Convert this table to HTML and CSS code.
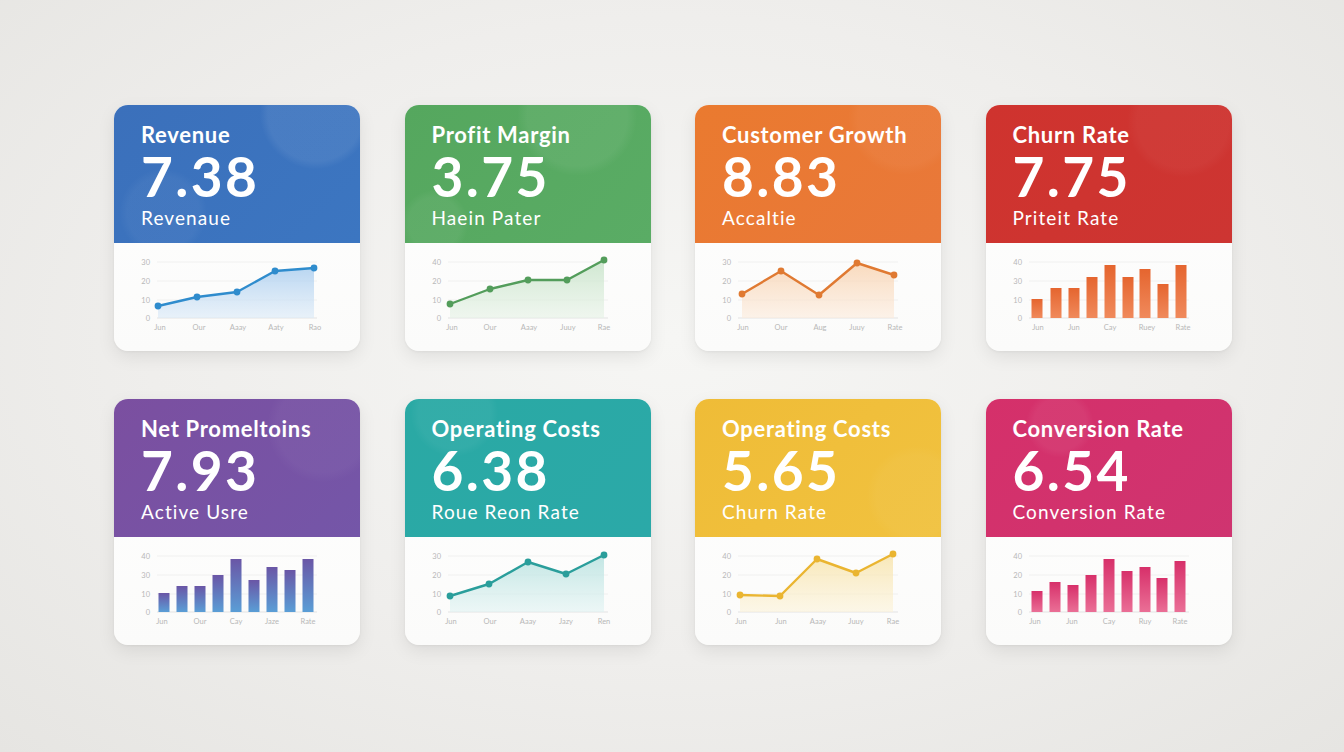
FILE: index.html
```html
<!DOCTYPE html>
<html>
<head>
<meta charset="utf-8">
<link rel="stylesheet" href="styles.css">
</head>
<body>
<main class="board">
  <section class="card">
    <div class="head blue">
      <div class="title">Revenue</div>
      <div class="value">7.38</div>
      <div class="sub">Revenaue</div>
    </div>
    <div class="body">
      <svg class="chart" viewBox="0 0 246 108" width="246" height="108">
        <defs><linearGradient id="g1" x1="0" y1="0" x2="0" y2="1"><stop offset="0" stop-color="#a9cdef" stop-opacity="0.8"/><stop offset="1" stop-color="#dbeaf8" stop-opacity="0.6"/></linearGradient></defs>
        <g class="grid"><line x1="43" y1="19" x2="203" y2="19"/><line x1="43" y1="38" x2="203" y2="38"/><line x1="43" y1="57" x2="203" y2="57"/><line class="axis" x1="43" y1="75" x2="203" y2="75"/></g>
        <g class="yl"><text x="36" y="21.5">30</text><text x="36" y="40.5">20</text><text x="36" y="59.5">10</text><text x="36" y="77.5">0</text></g>
        <path d="M44,63 L83,54 L123,49 L161,28 L200,25 L200,75 L44,75 Z" fill="url(#g1)"/>
        <polyline class="ln" points="44,63 83,54 123,49 161,28 200,25" stroke="#2f8ccd"/>
        <g fill="#2f8ccd"><circle cx="44" cy="63" r="3.4"/><circle cx="83" cy="54" r="3.4"/><circle cx="123" cy="49" r="3.4"/><circle cx="161" cy="28" r="3.4"/><circle cx="200" cy="25" r="3.4"/></g>
        <g class="xl"><text x="46" y="87">Jun</text><text x="85" y="87">Our</text><text x="124" y="87">Aaay</text><text x="162" y="87">Aaty</text><text x="201" y="87">Rao</text></g>
      </svg>
    </div>
  </section>

  <section class="card">
    <div class="head green">
      <div class="title">Profit Margin</div>
      <div class="value">3.75</div>
      <div class="sub">Haein Pater</div>
    </div>
    <div class="body">
      <svg class="chart" viewBox="0 0 246 108" width="246" height="108">
        <defs><linearGradient id="g2" x1="0" y1="0" x2="0" y2="1"><stop offset="0" stop-color="#c4e2c6" stop-opacity="0.8"/><stop offset="1" stop-color="#e6f2e6" stop-opacity="0.6"/></linearGradient></defs>
        <g class="grid"><line x1="43" y1="19" x2="203" y2="19"/><line x1="43" y1="38" x2="203" y2="38"/><line x1="43" y1="57" x2="203" y2="57"/><line class="axis" x1="43" y1="75" x2="203" y2="75"/></g>
        <g class="yl"><text x="36" y="21.5">40</text><text x="36" y="40.5">20</text><text x="36" y="59.5">10</text><text x="36" y="77.5">0</text></g>
        <path d="M45,61 L85,46 L123,37 L162,37 L199,17 L199,75 L45,75 Z" fill="url(#g2)"/>
        <polyline class="ln" points="45,61 85,46 123,37 162,37 199,17" stroke="#539d5b"/>
        <g fill="#539d5b"><circle cx="45" cy="61" r="3.4"/><circle cx="85" cy="46" r="3.4"/><circle cx="123" cy="37" r="3.4"/><circle cx="162" cy="37" r="3.4"/><circle cx="199" cy="17" r="3.4"/></g>
        <g class="xl"><text x="47" y="87">Jun</text><text x="85" y="87">Our</text><text x="124" y="87">Aaay</text><text x="163" y="87">Juuy</text><text x="199" y="87">Rae</text></g>
      </svg>
    </div>
  </section>

  <section class="card">
    <div class="head orange">
      <div class="title">Customer Growth</div>
      <div class="value">8.83</div>
      <div class="sub">Accaltie</div>
    </div>
    <div class="body">
      <svg class="chart" viewBox="0 0 246 108" width="246" height="108">
        <defs><linearGradient id="g3" x1="0" y1="0" x2="0" y2="1"><stop offset="0" stop-color="#f8cfa9" stop-opacity="0.75"/><stop offset="1" stop-color="#fcebdc" stop-opacity="0.6"/></linearGradient></defs>
        <g class="grid"><line x1="43" y1="19" x2="203" y2="19"/><line x1="43" y1="38" x2="203" y2="38"/><line x1="43" y1="57" x2="203" y2="57"/><line class="axis" x1="43" y1="75" x2="203" y2="75"/></g>
        <g class="yl"><text x="36" y="21.5">30</text><text x="36" y="40.5">20</text><text x="36" y="59.5">10</text><text x="36" y="77.5">0</text></g>
        <path d="M47,51 L86,28 L124,52 L162,20 L199,32 L199,75 L47,75 Z" fill="url(#g3)"/>
        <polyline class="ln" points="47,51 86,28 124,52 162,20 199,32" stroke="#e07a32"/>
        <g fill="#e07a32"><circle cx="47" cy="51" r="3.4"/><circle cx="86" cy="28" r="3.4"/><circle cx="124" cy="52" r="3.4"/><circle cx="162" cy="20" r="3.4"/><circle cx="199" cy="32" r="3.4"/></g>
        <g class="xl"><text x="48" y="87">Jun</text><text x="86" y="87">Our</text><text x="125" y="87">Aug</text><text x="162" y="87">Juuy</text><text x="200" y="87">Rate</text></g>
      </svg>
    </div>
  </section>

  <section class="card">
    <div class="head red">
      <div class="title">Churn Rate</div>
      <div class="value">7.75</div>
      <div class="sub">Priteit Rate</div>
    </div>
    <div class="body">
      <svg class="chart" viewBox="0 0 246 108" width="246" height="108">
        <defs><linearGradient id="g4" x1="0" y1="0" x2="0" y2="1"><stop offset="0" stop-color="#e5652f"/><stop offset="1" stop-color="#f08a5c"/></linearGradient></defs>
        <g class="grid"><line x1="43" y1="19" x2="203" y2="19"/><line x1="43" y1="38" x2="203" y2="38"/><line x1="43" y1="57" x2="203" y2="57"/><line class="axis" x1="43" y1="75" x2="203" y2="75"/></g>
        <g class="yl"><text x="36" y="21.5">40</text><text x="36" y="40.5">30</text><text x="36" y="59.5">10</text><text x="36" y="77.5">0</text></g>
        <g fill="url(#g4)">
          <rect x="45.5" y="56" width="11" height="19"/><rect x="64.5" y="45" width="11" height="30"/><rect x="82.5" y="45" width="11" height="30"/><rect x="100.5" y="34" width="11" height="41"/><rect x="118.5" y="22" width="11" height="53"/><rect x="136.5" y="34" width="11" height="41"/><rect x="153.5" y="26" width="11" height="49"/><rect x="171.5" y="41" width="11" height="34"/><rect x="189.5" y="22" width="11" height="53"/>
        </g>
        <g class="xl"><text x="52" y="87">Jun</text><text x="88" y="87">Jun</text><text x="124" y="87">Cay</text><text x="161" y="87">Ruey</text><text x="197" y="87">Rate</text></g>
      </svg>
    </div>
  </section>

  <section class="card">
    <div class="head purple">
      <div class="title">Net Promeltoins</div>
      <div class="value">7.93</div>
      <div class="sub">Active Usre</div>
    </div>
    <div class="body">
      <svg class="chart" viewBox="0 0 246 108" width="246" height="108">
        <defs><linearGradient id="g5" x1="0" y1="0" x2="0" y2="1"><stop offset="0" stop-color="#6a56a6"/><stop offset="1" stop-color="#5a9ed6"/></linearGradient></defs>
        <g class="grid"><line x1="43" y1="19" x2="203" y2="19"/><line x1="43" y1="38" x2="203" y2="38"/><line x1="43" y1="57" x2="203" y2="57"/><line class="axis" x1="43" y1="75" x2="203" y2="75"/></g>
        <g class="yl"><text x="36" y="21.5">40</text><text x="36" y="40.5">30</text><text x="36" y="59.5">10</text><text x="36" y="77.5">0</text></g>
        <g fill="url(#g5)">
          <rect x="44.5" y="56" width="11" height="19"/><rect x="62.5" y="49" width="11" height="26"/><rect x="80.5" y="49" width="11" height="26"/><rect x="98.5" y="38" width="11" height="37"/><rect x="116.5" y="22" width="11" height="53"/><rect x="134.5" y="43" width="11" height="32"/><rect x="152.5" y="30" width="11" height="45"/><rect x="170.5" y="33" width="11" height="42"/><rect x="188.5" y="22" width="11" height="53"/>
        </g>
        <g class="xl"><text x="48" y="87">Jun</text><text x="86" y="87">Our</text><text x="122" y="87">Cay</text><text x="158" y="87">Jaze</text><text x="194" y="87">Rate</text></g>
      </svg>
    </div>
  </section>

  <section class="card">
    <div class="head teal">
      <div class="title">Operating Costs</div>
      <div class="value">6.38</div>
      <div class="sub">Roue Reon Rate</div>
    </div>
    <div class="body">
      <svg class="chart" viewBox="0 0 246 108" width="246" height="108">
        <defs><linearGradient id="g6" x1="0" y1="0" x2="0" y2="1"><stop offset="0" stop-color="#b3e0dd" stop-opacity="0.8"/><stop offset="1" stop-color="#e1f3f3" stop-opacity="0.6"/></linearGradient></defs>
        <g class="grid"><line x1="43" y1="19" x2="203" y2="19"/><line x1="43" y1="38" x2="203" y2="38"/><line x1="43" y1="57" x2="203" y2="57"/><line class="axis" x1="43" y1="75" x2="203" y2="75"/></g>
        <g class="yl"><text x="36" y="21.5">30</text><text x="36" y="40.5">20</text><text x="36" y="59.5">10</text><text x="36" y="77.5">0</text></g>
        <path d="M45,59 L84,47 L123,25 L161,37 L199,18 L199,75 L45,75 Z" fill="url(#g6)"/>
        <polyline class="ln" points="45,59 84,47 123,25 161,37 199,18" stroke="#2a9e9b"/>
        <g fill="#2a9e9b"><circle cx="45" cy="59" r="3.4"/><circle cx="84" cy="47" r="3.4"/><circle cx="123" cy="25" r="3.4"/><circle cx="161" cy="37" r="3.4"/><circle cx="199" cy="18" r="3.4"/></g>
        <g class="xl"><text x="46" y="87">Jun</text><text x="85" y="87">Our</text><text x="123" y="87">Aaay</text><text x="161" y="87">Jazy</text><text x="199" y="87">Ren</text></g>
      </svg>
    </div>
  </section>

  <section class="card">
    <div class="head yellow">
      <div class="title">Operating Costs</div>
      <div class="value">5.65</div>
      <div class="sub">Churn Rate</div>
    </div>
    <div class="body">
      <svg class="chart" viewBox="0 0 246 108" width="246" height="108">
        <defs><linearGradient id="g7" x1="0" y1="0" x2="0" y2="1"><stop offset="0" stop-color="#f7e2a6" stop-opacity="0.8"/><stop offset="1" stop-color="#fcf3da" stop-opacity="0.6"/></linearGradient></defs>
        <g class="grid"><line x1="43" y1="19" x2="203" y2="19"/><line x1="43" y1="38" x2="203" y2="38"/><line x1="43" y1="57" x2="203" y2="57"/><line class="axis" x1="43" y1="75" x2="203" y2="75"/></g>
        <g class="yl"><text x="36" y="21.5">40</text><text x="36" y="40.5">20</text><text x="36" y="59.5">10</text><text x="36" y="77.5">0</text></g>
        <path d="M45,58 L85,59 L122,22 L161,36 L198,17 L198,75 L45,75 Z" fill="url(#g7)"/>
        <polyline class="ln" points="45,58 85,59 122,22 161,36 198,17" stroke="#eab531"/>
        <g fill="#eab531"><circle cx="45" cy="58" r="3.4"/><circle cx="85" cy="59" r="3.4"/><circle cx="122" cy="22" r="3.4"/><circle cx="161" cy="36" r="3.4"/><circle cx="198" cy="17" r="3.4"/></g>
        <g class="xl"><text x="46" y="87">Jun</text><text x="86" y="87">Jun</text><text x="123" y="87">Aaay</text><text x="161" y="87">Juuy</text><text x="198" y="87">Rae</text></g>
      </svg>
    </div>
  </section>

  <section class="card">
    <div class="head pink">
      <div class="title">Conversion Rate</div>
      <div class="value">6.54</div>
      <div class="sub">Conversion Rate</div>
    </div>
    <div class="body">
      <svg class="chart" viewBox="0 0 246 108" width="246" height="108">
        <defs><linearGradient id="g8" x1="0" y1="0" x2="0" y2="1"><stop offset="0" stop-color="#d7306a"/><stop offset="1" stop-color="#ea6f96"/></linearGradient></defs>
        <g class="grid"><line x1="43" y1="19" x2="203" y2="19"/><line x1="43" y1="38" x2="203" y2="38"/><line x1="43" y1="57" x2="203" y2="57"/><line class="axis" x1="43" y1="75" x2="203" y2="75"/></g>
        <g class="yl"><text x="36" y="21.5">40</text><text x="36" y="40.5">20</text><text x="36" y="59.5">10</text><text x="36" y="77.5">0</text></g>
        <g fill="url(#g8)">
          <rect x="45.5" y="54" width="11" height="21"/><rect x="63.5" y="45" width="11" height="30"/><rect x="81.5" y="48" width="11" height="27"/><rect x="99.5" y="38" width="11" height="37"/><rect x="117.5" y="22" width="11" height="53"/><rect x="135.5" y="34" width="11" height="41"/><rect x="153.5" y="30" width="11" height="45"/><rect x="170.5" y="41" width="11" height="34"/><rect x="188.5" y="24" width="11" height="51"/>
        </g>
        <g class="xl"><text x="49" y="87">Jun</text><text x="86" y="87">Jun</text><text x="123" y="87">Cay</text><text x="159" y="87">Ruy</text><text x="194" y="87">Rate</text></g>
      </svg>
    </div>
  </section>
</main>
</body>
</html>
```
FILE: styles.css
```css
html, body {
  margin: 0;
  padding: 0;
  height: 100%;
}
body {
  background: radial-gradient(ellipse at 50% 45%, #f6f6f4 0%, #efeeec 55%, #e6e5e2 100%);
  font-family: Lato, "Open Sans", "Liberation Sans", sans-serif;
  display: flex;
  align-items: center;
  justify-content: center;
}
.board {
  display: grid;
  grid-template-columns: repeat(4, 246px);
  grid-auto-rows: 246px;
  column-gap: 44.5px;
  row-gap: 48px;
  margin-left: 1.5px;
  margin-top: -2px;
}
.card {
  border-radius: 14px;
  overflow: hidden;
  background: linear-gradient(#ffffff, #fbfbfa);
  box-shadow: 0 6px 18px rgba(0, 0, 0, 0.08), 0 1px 3px rgba(0, 0, 0, 0.05);
  display: flex;
  flex-direction: column;
}
.head {
  height: 138px;
  box-sizing: border-box;
  padding: 17px 0 0 27px;
  color: #fff;
  display: flex;
  flex-direction: column;
}
.title {
  font-size: 22px;
  font-weight: 700;
  line-height: 26px;
  letter-spacing: 0.7px;
}
.value {
  font-size: 55px;
  font-weight: 700;
  line-height: 56px;
  letter-spacing: 2.4px;
}
.sub {
  font-size: 19px;
  font-weight: 400;
  line-height: 22px;
  margin-top: 3px;
  letter-spacing: 1.1px;
}
.blue {
  background:
    radial-gradient(circle at 82% 6%, rgba(255,255,255,0.07) 0 48px, rgba(255,255,255,0) 56px),
    radial-gradient(circle at 20% 78%, rgba(255,255,255,0.04) 0 36px, rgba(255,255,255,0) 44px),
    linear-gradient(135deg, #3b70bb, #3c76c1);
}
.green {
  background:
    radial-gradient(circle at 70% 8%, rgba(255,255,255,0.06) 0 50px, rgba(255,255,255,0) 60px),
    radial-gradient(circle at 12% 86%, rgba(255,255,255,0.05) 0 26px, rgba(255,255,255,0) 34px),
    linear-gradient(135deg, #55a75e, #5aac65);
}
.orange {
  background:
    radial-gradient(circle at 85% 10%, rgba(255,255,255,0.04) 0 46px, rgba(255,255,255,0) 56px),
    linear-gradient(135deg, #ea7a2f, #e9783a);
}
.red {
  background:
    radial-gradient(circle at 80% 12%, rgba(255,255,255,0.035) 0 46px, rgba(255,255,255,0) 56px),
    linear-gradient(135deg, #cf332e, #cd3532);
}
.purple {
  background:
    radial-gradient(circle at 85% 20%, rgba(255,255,255,0.035) 0 46px, rgba(255,255,255,0) 56px),
    linear-gradient(135deg, #7b4fa0, #7456a8);
}
.teal {
  background:
    radial-gradient(circle at 20% 10%, rgba(255,255,255,0.045) 0 36px, rgba(255,255,255,0) 44px),
    linear-gradient(135deg, #2aa9a4, #2ba9a8);
}
.yellow {
  background:
    radial-gradient(circle at 90% 70%, rgba(255,255,255,0.035) 0 40px, rgba(255,255,255,0) 50px),
    linear-gradient(135deg, #efbc37, #f1c23f);
}
.pink {
  background:
    radial-gradient(circle at 30% 18%, rgba(255,255,255,0.05) 0 26px, rgba(255,255,255,0) 34px),
    linear-gradient(135deg, #d5306a, #cf3470);
}
.body {
  flex: 1;
}
.chart {
  display: block;
  font-family: Lato, "Liberation Sans", sans-serif;
}
.grid line {
  stroke: #eeeeee;
  stroke-width: 0.8;
}
.grid line.axis {
  stroke: #e3e3e3;
  stroke-width: 1;
}
.yl text {
  font-size: 7.5px;
  fill: #b8b8b8;
  text-anchor: end;
}
.xl text {
  font-size: 7.5px;
  fill: #b8b8b8;
  text-anchor: middle;
}
.ln {
  fill: none;
  stroke-width: 2.4;
  stroke-linejoin: round;
  stroke-linecap: round;
}
```
